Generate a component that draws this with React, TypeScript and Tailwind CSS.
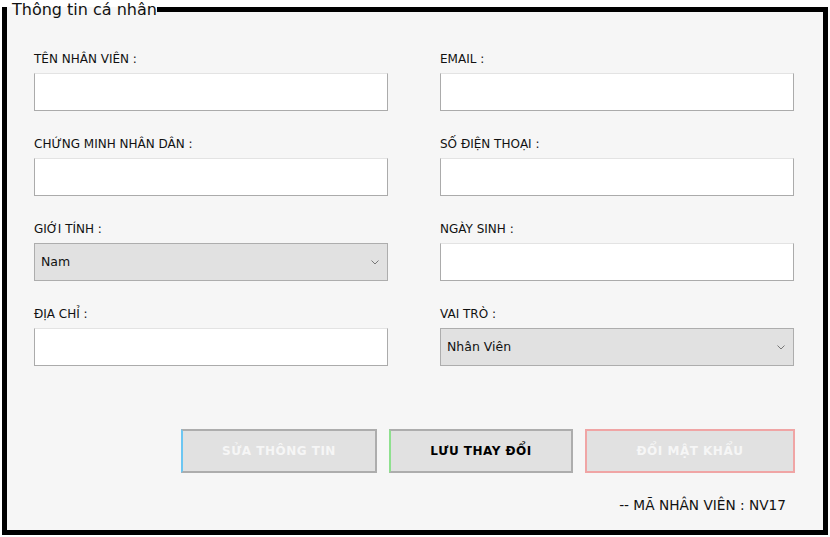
const font = { fontFamily: '"DejaVu Sans", Verdana, sans-serif' };

type Field = { label: string; kind: "input" | "select"; value?: string };

const fields: Field[] = [
  { label: "TÊN NHÂN VIÊN :", kind: "input" },
  { label: "EMAIL :", kind: "input" },
  { label: "CHỨNG MINH NHÂN DÂN :", kind: "input" },
  { label: "SỐ ĐIỆN THOẠI :", kind: "input" },
  { label: "GIỚI TÍNH :", kind: "select", value: "Nam" },
  { label: "NGÀY SINH :", kind: "input" },
  { label: "ĐỊA CHỈ :", kind: "input" },
  { label: "VAI TRÒ :", kind: "select", value: "Nhân Viên" },
];

const Chevron = () => (
  <svg width="8" height="5" viewBox="0 0 8 5" className="text-[#777]">
    <path d="M0.5 0.5 L4 4 L7.5 0.5" fill="none" stroke="currentColor" strokeWidth="1" />
  </svg>
);

const FormField = ({ field }: { field: Field }) => (
  <div className="flex flex-col">
    <label className="h-[15px] text-[12px] leading-[15px] text-[#111] mb-[6px]">{field.label}</label>
    {field.kind === "input" ? (
      <div className="h-[38px] bg-white border border-[#ababab] border-t-[#e3e3e3]" />
    ) : (
      <div className="h-[38px] bg-[#e1e1e1] border border-[#adadad] flex items-center justify-between pl-[6px] pr-[8px]">
        <span className="text-[12.5px] text-[#111]">{field.value}</span>
        <Chevron />
      </div>
    )}
  </div>
);

export default function App() {
  return (
    <div className="w-[830px] h-[537px] bg-white pl-[2px]" style={font}>
      <fieldset className="w-[826px] h-[535px] border-[5px] border-black bg-[#f6f6f6]">
        <legend className="pl-[5px] text-[16px] leading-[19px] text-[#111]">Thông tin cá nhân</legend>
        <div className="grid grid-cols-2 gap-x-[52px] gap-y-[26px] pl-[27px] pr-[29px] pt-[33px]">
          {fields.map((f) => (
            <FormField key={f.label} field={f} />
          ))}
        </div>
        <div className="flex justify-end gap-[12px] pr-[28px] mt-[63px]">
          <button className="w-[196px] h-[44px] bg-[#e1e1e1] border-2 border-[#adadad] border-l-[#6cc6f2] text-[12px] font-bold tracking-[0.5px] text-[#f6f6f6]">
            SỬA THÔNG TIN
          </button>
          <button className="w-[184px] h-[44px] bg-[#e1e1e1] border-2 border-[#adadad] border-l-[#8ee08e] text-[12px] font-bold tracking-[0.5px] text-black">
            LƯU THAY ĐỔI
          </button>
          <button className="w-[210px] h-[44px] bg-[#e1e1e1] border-2 border-[#f0a5a5] text-[12px] font-bold tracking-[0.5px] text-[#f6f6f6]">
            ĐỔI MẬT KHẨU
          </button>
        </div>
        <div className="flex justify-end pr-[37px] mt-[22px]">
          <span className="text-[13.7px] text-[#111]">-- MÃ NHÂN VIÊN : NV17</span>
        </div>
      </fieldset>
    </div>
  );
}
